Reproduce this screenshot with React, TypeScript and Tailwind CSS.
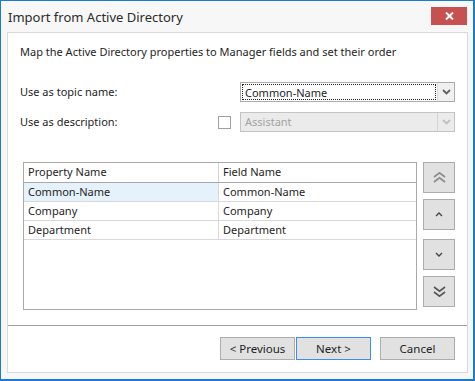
import React from "react";

const font = { fontFamily: '"Noto Sans", "Open Sans", sans-serif' };

function DoubleUp({ color }: { color: string }) {
  return (
    <svg width="13" height="11" viewBox="0 0 13 11">
      <path d="M1 5 L6.5 0.8 L12 5" fill="none" stroke={color} strokeWidth="1.6" />
      <path d="M1 10 L6.5 5.8 L12 10" fill="none" stroke={color} strokeWidth="1.6" />
    </svg>
  );
}
function DoubleDown({ color }: { color: string }) {
  return (
    <svg width="13" height="11" viewBox="0 0 13 11">
      <path d="M1 1 L6.5 5.2 L12 1" fill="none" stroke={color} strokeWidth="1.6" />
      <path d="M1 6 L6.5 10.2 L12 6" fill="none" stroke={color} strokeWidth="1.6" />
    </svg>
  );
}
function SmallUp() {
  return (
    <svg width="8" height="5" viewBox="0 0 8 5">
      <path d="M1 4 L4 1 L7 4" fill="none" stroke="#444" strokeWidth="1.4" />
    </svg>
  );
}
function SmallDown() {
  return (
    <svg width="8" height="5" viewBox="0 0 8 5">
      <path d="M1 1 L4 4 L7 1" fill="none" stroke="#444" strokeWidth="1.4" />
    </svg>
  );
}
function ComboArrow({ color }: { color: string }) {
  return (
    <svg width="9" height="6" viewBox="0 0 9 6">
      <path d="M1 1 L4.5 4.5 L8 1" fill="none" stroke={color} strokeWidth="1.8" />
    </svg>
  );
}

function SideBtn({ children }: { children: React.ReactNode }) {
  return (
    <div className="w-[32px] h-[31px] border border-[#adadad] bg-[#e1e1e1] flex items-center justify-center">
      {children}
    </div>
  );
}

function FootBtn({ label, primary }: { label: string; primary?: boolean }) {
  return (
    <div
      className={
        "w-[75px] h-[23px] flex items-center justify-center bg-[#e1e1e1] text-[11.5px] text-[#1e1e1e] border " +
        (primary ? "border-[#3c8ee6]" : "border-[#adadad]")
      }
    >
      {label}
    </div>
  );
}

const rows = [
  ["Common-Name", "Common-Name"],
  ["Company", "Company"],
  ["Department", "Department"],
];

export default function App() {
  return (
    <div
      style={font}
      className="w-[475px] h-[381px] bg-[#f7f7f7] border-l border-t border-r-2 border-b-2 border-[#1c7bd0] flex flex-col text-[#1e1e1e]"
    >
      {/* title bar */}
      <div className="h-[31px] flex items-start">
        <div className="ml-[7px] mt-[6px] text-[13px] leading-[20px] text-[#2b2b2b]">
          Import from Active Directory
        </div>
        <div className="ml-auto mr-[6px] mt-[6px] w-[36px] h-[18px] bg-[#c75050] flex items-center justify-center">
          <svg width="9" height="8" viewBox="0 0 9 8">
            <path d="M1 0.5 L8 7.5 M8 0.5 L1 7.5" stroke="#fff" strokeWidth="2" />
          </svg>
        </div>
      </div>

      {/* panel */}
      <div className="ml-[6px] mr-[5px] h-[341px] border border-[#d9d9d9] bg-white flex flex-col text-[11px]">
        <div className="ml-[12px] mt-[11px] h-[16px] leading-[16px]">
          Map the Active Directory properties to Manager fields and set their order
        </div>

        <div className="mt-[22px] h-[20px] flex items-center">
          <div className="ml-[12px] w-[220px]">Use as topic name:</div>
          <div className="w-[215px] h-[20px] border border-[#acacac] bg-white flex">
            <div className="flex-1 flex items-center p-[1px]">
              <div className="flex-1 h-full border border-dotted border-[#222] flex items-center pl-[2px] leading-none">
                Common-Name
              </div>
            </div>
            <div className="w-[17px] border-l border-[#dcdcdc] bg-[#f0f0f0] flex items-center justify-center">
              <ComboArrow color="#606060" />
            </div>
          </div>
        </div>

        <div className="mt-[10px] h-[20px] flex items-center">
          <div className="ml-[12px] w-[198px]">Use as description:</div>
          <div className="w-[13px] h-[13px] border border-[#a0a0a0] bg-white" />
          <div className="ml-[9px] w-[215px] h-[20px] border border-[#c4c4c4] bg-[#ebebeb] flex">
            <div className="flex-1 flex items-center pl-[4px] text-[#a2a2a2]">Assistant</div>
            <div className="w-[17px] border-l border-[#d4d4d4] flex items-center justify-center">
              <ComboArrow color="#c0c0c0" />
            </div>
          </div>
        </div>

        <div className="mt-[30px] h-[148px] flex">
          <div className="ml-[15px] w-[394px] h-[148px] border border-[#a9a9a9] bg-white flex flex-col">
            <div className="h-[20px] flex border-b border-[#a9a9a9]">
              <div className="w-[195px] border-r border-[#d4d4d4] pl-[4px] flex items-center">
                Property Name
              </div>
              <div className="flex-1 pl-[4px] flex items-center">Field Name</div>
            </div>
            {rows.map((r, i) => (
              <div key={i} className="h-[19px] flex border-b border-[#d9d9d9]">
                <div
                  className={
                    "w-[195px] border-r border-[#d9d9d9] pl-[4px] flex items-center " +
                    (i === 0 ? "bg-[#e5f1fb]" : "")
                  }
                >
                  {r[0]}
                </div>
                <div className="flex-1 pl-[4px] flex items-center">{r[1]}</div>
              </div>
            ))}
          </div>
          <div className="ml-[6px] flex flex-col">
            <SideBtn>
              <DoubleUp color="#8a8a8a" />
            </SideBtn>
            <div className="mt-[6px]">
              <SideBtn>
                <SmallUp />
              </SideBtn>
            </div>
            <div className="mt-[9px]">
              <SideBtn>
                <SmallDown />
              </SideBtn>
            </div>
            <div className="mt-[6px]">
              <SideBtn>
                <DoubleDown color="#555" />
              </SideBtn>
            </div>
          </div>
        </div>

        <div className="mt-[15px] h-[1px] bg-[#a0a0a0]" />

        <div className="mt-[11px] flex justify-end pr-[12px]">
          <FootBtn label="< Previous" />
          <div className="ml-[1px]">
            <FootBtn label="Next >" primary />
          </div>
          <div className="ml-[9px]">
            <FootBtn label="Cancel" />
          </div>
        </div>
      </div>
    </div>
  );
}
